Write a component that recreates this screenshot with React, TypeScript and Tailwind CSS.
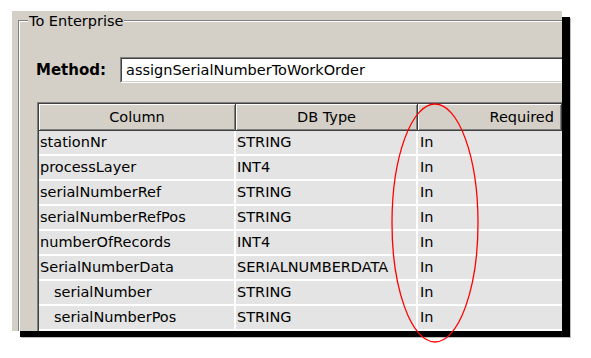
const rows = [
  { name: "stationNr", type: "STRING" },
  { name: "processLayer", type: "INT4" },
  { name: "serialNumberRef", type: "STRING" },
  { name: "serialNumberRefPos", type: "STRING" },
  { name: "numberOfRecords", type: "INT4" },
  { name: "SerialNumberData", type: "SERIALNUMBERDATA" },
  { name: "serialNumber", type: "STRING", sub: true },
  { name: "serialNumberPos", type: "STRING", sub: true },
];

const headCell =
  "h-[27px] flex items-center bg-[#d4d0c8] border-r border-b border-[#404040] shadow-[inset_1px_1px_0_#fff,inset_-1px_-1px_0_#808080]";

const App = () => {
  return (
    <div
      className="relative w-[591px] h-[358px] bg-white pt-[11px] pl-[12px] text-black"
      style={{ fontFamily: '"DejaVu Sans", Verdana, sans-serif' }}
    >
      {/* panel with hard drop shadow */}
      <div className="w-[550px] h-[320px] bg-[#d4d0c8] overflow-hidden pl-[6px] pt-[9px] shadow-[8px_6px_0_#000,9px_7px_0_#bdbdbd]">
        {/* group box */}
        <div className="relative w-[720px] h-[400px] border-l border-t border-[#808080]">
          <span className="absolute -top-[8px] left-[9px] px-[1px] bg-[#d4d0c8] text-[14.5px] leading-[17px]">
            To Enterprise
          </span>
          <div className="h-full border-l border-t border-white">
            <div className="flex items-center mt-[35px] h-[26px]">
              <span className="ml-[16px] w-[84px] font-bold text-[15px] leading-[17px]">
                Method:
              </span>
              <div className="flex-1 h-[26px] bg-white border-l border-t border-[#808080] border-r border-b border-r-white border-b-white">
                <div className="h-full flex items-center pl-[4px] border-l border-t border-[#404040] border-r border-b border-r-[#d4d0c8] border-b-[#d4d0c8] text-[14.5px] leading-[17px]">
                  assignSerialNumberToWorkOrder
                </div>
              </div>
            </div>

            {/* table */}
            <div className="ml-[17px] mt-[19px] border-l border-t border-[#808080]">
              <div className="border-l border-t border-[#404040] text-[14.5px] leading-[17px]">
                <div className="flex">
                  <div className={`${headCell} w-[197px] justify-center`}>Column</div>
                  <div className={`${headCell} w-[182px] justify-center`}>DB Type</div>
                  <div className={`${headCell} w-[144px] justify-end pr-[7px]`}>Required</div>
                </div>
                {rows.map((r) => (
                  <div key={r.name} className="flex h-[25px]">
                    <div
                      className={`w-[197px] flex items-center bg-[#e4e4e4] border-r-2 border-b-2 border-white ${
                        r.sub ? "pl-[15px]" : "pl-[1px]"
                      }`}
                    >
                      {r.name}
                    </div>
                    <div className="w-[182px] flex items-center pl-[1px] bg-[#e4e4e4] border-r-2 border-b-2 border-white whitespace-nowrap">
                      {r.type}
                    </div>
                    <div className="w-[200px] flex items-center pl-[2px] bg-[#e4e4e4] border-b-2 border-white">
                      In
                    </div>
                  </div>
                ))}
              </div>
            </div>
          </div>
        </div>
      </div>

      {/* red annotation ellipse */}
      <svg
        className="absolute left-0 top-0 pointer-events-none"
        width="591"
        height="358"
        viewBox="0 0 591 358"
      >
        <ellipse cx="435" cy="223" rx="43" ry="119" fill="none" stroke="#ff0000" strokeWidth="1.3" />
      </svg>
    </div>
  );
};

export default App;
